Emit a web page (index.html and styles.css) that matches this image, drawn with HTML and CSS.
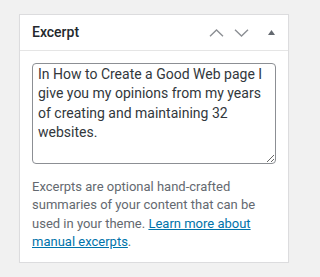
FILE: index.html
```html
<!DOCTYPE html>
<html lang="en">
<head>
<meta charset="utf-8">
<title>Excerpt</title>
<link rel="stylesheet" href="styles.css">
</head>
<body>
<div class="postbox">
  <div class="postbox-header">
    <h2 class="hndle">Excerpt</h2>
    <div class="handle-actions">
      <button class="handle-btn order-higher" type="button" aria-label="Move up">
        <svg width="15" height="8" viewBox="0 0 15 8"><path d="M1 7.2 L7.5 1 L14 7.2" fill="none" stroke="currentColor" stroke-width="1.4"/></svg>
      </button>
      <button class="handle-btn order-lower" type="button" aria-label="Move down">
        <svg width="15" height="8" viewBox="0 0 15 8"><path d="M1 0.8 L7.5 7 L14 0.8" fill="none" stroke="currentColor" stroke-width="1.4"/></svg>
      </button>
      <button class="handle-btn toggle" type="button" aria-label="Toggle panel">
        <svg width="7" height="5" viewBox="0 0 7 5"><path d="M0 5 L3.5 0 L7 5 Z" fill="currentColor"/></svg>
      </button>
    </div>
  </div>
  <div class="inside">
    <textarea class="excerpt" rows="1">In How to Create a Good Web page I give you my opinions from my years of creating and maintaining 32 websites.</textarea>
    <p class="description">Excerpts are optional hand-crafted summaries of your content that can be used in your theme. <a href="#">Learn more about manual excerpts</a>.</p>
  </div>
</div>
</body>
</html>
```
FILE: styles.css
```css
html, body {
  margin: 0;
  padding: 0;
  background: #f1f1f1;
}
body {
  padding: 14px 0 0 19px;
  font-family: Roboto, "Noto Sans", sans-serif;
}
.postbox {
  width: 270px;
  box-sizing: border-box;
  background: #fff;
  border: 1px solid #dcdcde;
  box-shadow: 0 1px 1px rgba(0,0,0,.04);
}
.postbox-header {
  display: flex;
  align-items: center;
  height: 35px;
  border-bottom: 1px solid #e5e5e5;
}
.hndle {
  flex: 1;
  margin: 0;
  padding: 0 12px;
  font-size: 14px;
  font-weight: 500;
  color: #23282d;
  line-height: 35px;
}
.handle-actions {
  display: flex;
  height: 35px;
}
.handle-btn {
  display: flex;
  align-items: center;
  justify-content: center;
  height: 35px;
  margin: 0;
  padding: 0;
  border: 0;
  background: none;
  color: #8c8f94;
}
.order-higher, .order-lower { width: 25px; }
.toggle { width: 34px; color: #646970; }
.handle-btn svg { display: block; }
.inside {
  padding: 12px 12px 11px;
}
.excerpt {
  display: block;
  width: 100%;
  height: 101px;
  box-sizing: border-box;
  margin: 0;
  padding: 1px 5px;
  border: 1px solid #8c8f94;
  border-radius: 4px;
  font-family: inherit;
  font-size: 14px;
  line-height: 19.4px;
  color: #32373c;
  resize: vertical;
}
.description {
  margin: 14px 0 0;
  font-size: 13px;
  line-height: 18.3px;
  color: #646970;
}
.description a {
  color: #0073aa;
  text-decoration: underline;
}
```
